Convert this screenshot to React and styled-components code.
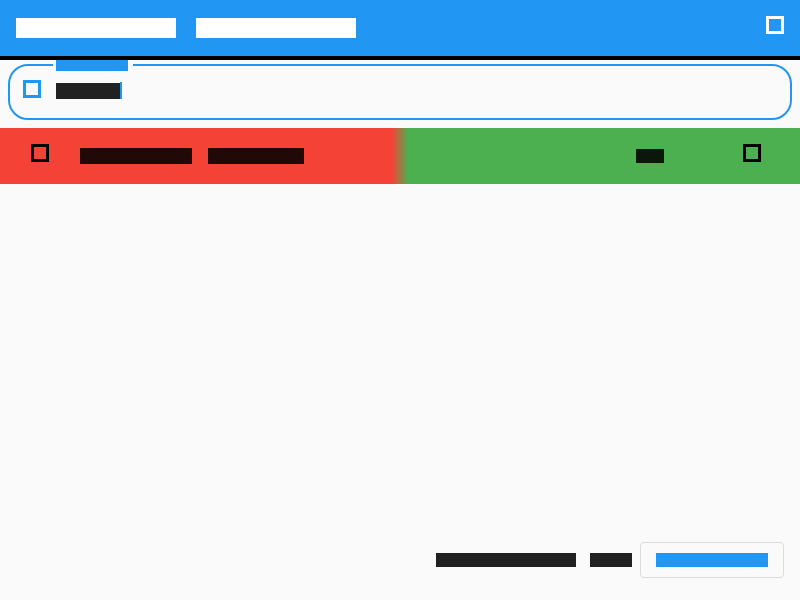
import React from 'react';
import styled, { createGlobalStyle } from 'styled-components';

const GlobalStyle = createGlobalStyle`
  html, body {
    margin: 0;
    padding: 0;
    background: #fafafa;
    font-family: "Liberation Sans", Arial, sans-serif;
  }
`;

const Page = styled.div`
  display: flex;
  flex-direction: column;
  height: 100vh;
  background: #fafafa;
`;

// 텍스트 블록 (Ahem 스타일: 글자 하나가 1em 정사각형)
const Block = styled.span`
  display: inline-block;
  flex: none;
  width: ${(p) => p.$w}px;
  height: ${(p) => p.$h}px;
  margin-top: ${(p) => p.$top || 0}px;
  background: ${(p) => p.$c};
  color: ${(p) => p.$c};
  font-size: ${(p) => Math.max(p.$h - 6, 8)}px;
  line-height: ${(p) => p.$h}px;
  overflow: hidden;
  white-space: nowrap;
`;

const Words = styled.div`
  display: flex;
  gap: ${(p) => p.$gap}px;
  margin-top: ${(p) => p.$top || 0}px;
`;

// 아이콘 (폰트 없는 아이콘 = 사각형 테두리)
const BoxIcon = styled.span`
  display: inline-block;
  flex: none;
  box-sizing: border-box;
  width: 18px;
  height: 18px;
  border: 3px solid ${(p) => p.$c};
  margin-top: ${(p) => p.$top || 0}px;
`;

const AppBar = styled.header`
  display: flex;
  align-items: flex-start;
  justify-content: space-between;
  height: 56px;
  padding: 0 16px;
  background: #2196f3;
  border-bottom: 4px solid #000;
`;

const FieldWrap = styled.div`
  padding: 4px 8px 8px;
`;

const Field = styled.div`
  position: relative;
  display: flex;
  align-items: flex-start;
  height: 56px;
  box-sizing: border-box;
  padding: 14px 13px 0;
  border: 2px solid #2196f3;
  border-radius: 20px;
`;

const FloatingLabel = styled.span`
  position: absolute;
  top: -6px;
  left: 43px;
  padding: 0 5px 0 3px;
  background: #fafafa;
  display: flex;
`;

const FieldValue = styled.div`
  display: flex;
  margin-left: 15px;
  margin-top: 3px;
`;

const Cursor = styled.span`
  display: inline-block;
  width: 2px;
  height: 17px;
  margin-top: -1px;
  background: #2196f3;
`;

const SwipeRow = styled.div`
  display: flex;
  justify-content: space-between;
  align-items: flex-start;
  height: 56px;
  padding: 0 39px 0 31px;
  background: linear-gradient(90deg, #f44336 49%, #4caf50 51%);
`;

const Group = styled.div`
  display: flex;
  align-items: flex-start;
  gap: ${(p) => p.$gap}px;
`;

const Spacer = styled.div`
  flex: 1;
`;

const Footer = styled.div`
  display: flex;
  align-items: center;
  justify-content: flex-end;
  gap: 8px;
  padding: 0 16px 22px;
`;

const OutlineButton = styled.button`
  display: flex;
  align-items: center;
  box-sizing: border-box;
  width: 144px;
  height: 36px;
  padding: 0 15px;
  border: 1px solid #dcdcdc;
  border-radius: 4px;
  background: transparent;
  font: inherit;
`;

// 87% 검정 텍스트가 배경 위에 합성된 색
const ON_RED = '#200907';
const ON_GREEN = '#0a170a';
const TEXT = '#212121';
const BLUE = '#2196f3';

export default function App() {
  return (
    <Page>
      <GlobalStyle />
      <AppBar>
        <Words $gap={20} $top={18}>
          <Block $w={160} $h={20} $c="#fff">Settings</Block>
          <Block $w={160} $h={20} $c="#fff">Overview</Block>
        </Words>
        <BoxIcon $c="#fff" $top={16} />
      </AppBar>

      <FieldWrap>
        <Field>
          <FloatingLabel>
            <Block $w={72} $h={11} $c={BLUE}>Search</Block>
          </FloatingLabel>
          <BoxIcon $c={BLUE} />
          <FieldValue>
            <Block $w={64} $h={16} $c={TEXT}>Text</Block>
            <Cursor />
          </FieldValue>
        </Field>
      </FieldWrap>

      <SwipeRow>
        <Group $gap={31}>
          <BoxIcon $c="#000" $top={16} />
          <Words $gap={16} $top={20}>
            <Block $w={112} $h={16} $c={ON_RED}>Archive</Block>
            <Block $w={96} $h={16} $c={ON_RED}>Delete</Block>
          </Words>
        </Group>
        <Group $gap={79}>
          <Block $w={28} $h={14} $c={ON_GREEN} $top={21}>OK</Block>
          <BoxIcon $c="#000" $top={16} />
        </Group>
      </SwipeRow>

      <Spacer />

      <Footer>
        <Words $gap={14}>
          <Block $w={140} $h={14} $c={TEXT}>Page total</Block>
          <Block $w={42} $h={14} $c={TEXT}>100</Block>
        </Words>
        <OutlineButton>
          <Block $w={112} $h={14} $c={BLUE}>Continue</Block>
        </OutlineButton>
      </Footer>
    </Page>
  );
}
